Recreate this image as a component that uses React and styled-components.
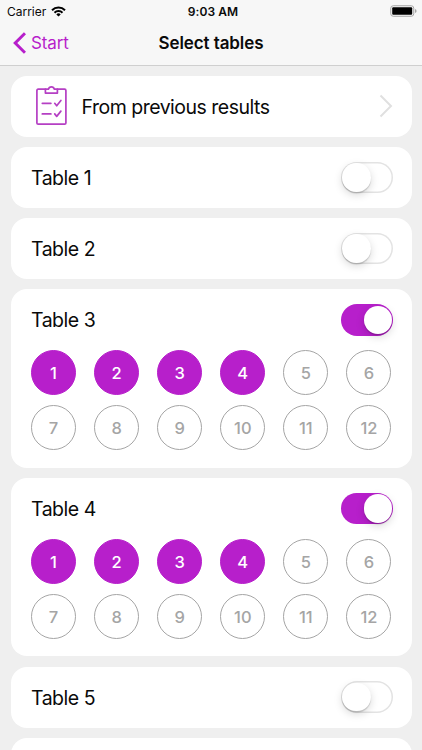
import { useState } from 'react';
import styled, { createGlobalStyle, ThemeProvider } from 'styled-components';

const theme = {
  colors: {
    accent: '#b71fcb',
    background: '#efefef',
    bar: '#f7f7f7',
    gray: '#a5a5a5',
    silver: '#e3e3e3',
  },
};

const GlobalStyle = createGlobalStyle`
  * {
    box-sizing: border-box;
  }
  body {
    margin: 0;
    background-color: #efefef;
    font-family: Inter, 'Liberation Sans', sans-serif;
    color: #0a0a0a;
  }
  button {
    font-family: inherit;
    padding: 0;
    cursor: pointer;
  }
`;

const Screen = styled.div`
  height: 750px;
  overflow: hidden;
  background-color: ${({ theme }) => theme.colors.background};
`;

const Header = styled.header`
  height: 66px;
  background-color: ${({ theme }) => theme.colors.bar};
  border-bottom: 1px solid #cfcfcf;
`;

const StatusBar = styled.div`
  display: grid;
  grid-template-columns: 1fr auto 1fr;
  align-items: center;
  height: 22px;
  padding: 0 5px 0 7px;
  font-size: 12px;
`;

const Carrier = styled.div`
  display: flex;
  align-items: center;
  gap: 5px;
  letter-spacing: -0.02px;
`;

const Time = styled.span`
  font-weight: 600;
  letter-spacing: 0.1px;
  padding-left: 2px;
`;

const Battery = styled.svg`
  justify-self: end;
`;

const NavBar = styled.nav`
  display: grid;
  grid-template-columns: 1fr auto 1fr;
  align-items: center;
  height: 42px;
  padding: 0 13px;
`;

const BackButton = styled.button`
  display: flex;
  align-items: center;
  gap: 5px;
  border: 0;
  background: none;
  color: ${({ theme }) => theme.colors.accent};
  font-size: 17px;
  letter-spacing: -0.1px;
`;

const Title = styled.h1`
  margin: 0;
  font-size: 17px;
  font-weight: 600;
  letter-spacing: -0.1px;
`;

const List = styled.main`
  display: flex;
  flex-direction: column;
  gap: 10.3px;
  padding: 9.6px 10.5px;
`;

const Card = styled.section`
  flex: none;
  padding: 0 18.5px 0 20.5px;
  border-radius: 16px;
  background-color: #fff;
`;

const Row = styled.div`
  display: flex;
  align-items: center;
  height: 61px;
`;

const Label = styled.span`
  flex: 1;
  padding-top: 1px;
  font-size: 19.5px;
  letter-spacing: -0.5px;
`;

const ClipboardIcon = styled.svg`
  margin: 0 14.5px 0 4.5px;
`;

const Switch = styled.button`
  display: flex;
  align-items: center;
  justify-content: ${({ $on }) => ($on ? 'flex-end' : 'flex-start')};
  width: 52px;
  height: 31.5px;
  padding: 0 1px;
  border: 0;
  border-radius: 16px;
  background-color: ${({ $on, theme }) => ($on ? theme.colors.accent : '#fff')};
  box-shadow: ${({ $on, theme }) =>
    $on ? 'none' : `inset 0 0 0 1.5px ${theme.colors.silver}`};
`;

const Knob = styled.span`
  width: 28.5px;
  height: 28.5px;
  border-radius: 50%;
  background-color: #fff;
  box-shadow: 0 3px 8px rgba(0, 0, 0, 0.15), 0 1.5px 1px rgba(0, 0, 0, 0.16);
`;

const Numbers = styled.div`
  display: grid;
  grid-template-columns: repeat(6, 45px);
  justify-content: space-between;
  row-gap: 10px;
  padding: 0 1.5px 17.3px 0;
`;

const NumberButton = styled.button`
  height: 45px;
  border: 1px solid ${({ $on, theme }) => ($on ? theme.colors.accent : theme.colors.gray)};
  border-radius: 50%;
  background-color: ${({ $on, theme }) => ($on ? theme.colors.accent : '#fff')};
  color: ${({ $on, theme }) => ($on ? '#fff' : theme.colors.gray)};
  font-size: 16.5px;
  font-weight: 500;
`;

const NUMBERS = Array.from({ length: 12 }, (_, index) => index + 1);

const TableCard = ({ table, enabled = false }) => {
  const [on, setOn] = useState(enabled);
  const [selected, setSelected] = useState([1, 2, 3, 4]);

  const toggleNumber = number =>
    setSelected(
      selected.includes(number)
        ? selected.filter(item => item !== number)
        : [...selected, number]
    );

  return (
    <Card>
      <Row>
        <Label>Table {table}</Label>
        <Switch
          $on={on}
          role='switch'
          aria-checked={on}
          aria-label={`Table ${table}`}
          onClick={() => setOn(!on)}
        >
          <Knob />
        </Switch>
      </Row>
      {on && (
        <Numbers>
          {NUMBERS.map(number => (
            <NumberButton
              key={number}
              $on={selected.includes(number)}
              onClick={() => toggleNumber(number)}
            >
              {number}
            </NumberButton>
          ))}
        </Numbers>
      )}
    </Card>
  );
};

const App = () => (
  <ThemeProvider theme={theme}>
    <GlobalStyle />
    <Screen>
      <Header>
        <StatusBar>
          <Carrier>
            Carrier
            <svg width='15' height='11' viewBox='0 0 15 11' fill='none' stroke='#000' strokeWidth='2'>
              <path d='M1 4.2a9.2 9.2 0 0 1 13 0' />
              <path d='M3.5 6.7a5.7 5.7 0 0 1 8 0' />
              <path d='M7.5 10.6 5.3 8.4a3.1 3.1 0 0 1 4.4 0z' fill='#000' stroke='none' />
            </svg>
          </Carrier>
          <Time>9:03 AM</Time>
          <Battery width='27' height='12' viewBox='0 0 27 12'>
            <rect x='0.75' y='0.75' width='23' height='10.5' rx='2.5' fill='none' stroke='#a5a5a5' />
            <rect x='2.2' y='2.2' width='20' height='7.6' rx='1' />
            <path d='M25 4v4q1.6-.5 1.6-2T25 4z' fill='#a5a5a5' />
          </Battery>
        </StatusBar>
        <NavBar>
          <BackButton>
            <svg width='13' height='22' viewBox='0 0 13 22' fill='none' stroke='currentColor' strokeWidth='3'>
              <path d='M12 1.2 2.2 11l9.8 9.8' />
            </svg>
            Start
          </BackButton>
          <Title>Select tables</Title>
        </NavBar>
      </Header>
      <List>
        <Card>
          <Row>
            <ClipboardIcon
              width='31.5'
              height='40'
              viewBox='0 0 31.5 40'
              fill='none'
              stroke='#b53fc4'
              strokeWidth='1.7'
              strokeLinecap='round'
              strokeLinejoin='round'
            >
              <path d='M9.4 3.2H2.2Q.9 3.2.9 4.5v32.4q0 1.3 1.3 1.3h26.4q1.3 0 1.3-1.3V4.5q0-1.3-1.3-1.3H21.4' />
              <path d='M9.4 3.2h3a3.1 3.1 0 0 1 6 0h3v3.9h-12z' />
              <path d='M6.3 17.3h8.6M6.3 27.9h8.6M18.7 17.3l2 2.5 4.2-5.3M18.7 27.9l2 2.5 4.2-5.3' />
            </ClipboardIcon>
            <Label>From previous results</Label>
            <svg width='14' height='24' viewBox='0 0 14 24' fill='none' stroke='#e0e0e0' strokeWidth='2'>
              <path d='M1.5 1.5 12 12 1.5 22.5' />
            </svg>
          </Row>
        </Card>
        <TableCard table={1} />
        <TableCard table={2} />
        <TableCard table={3} enabled />
        <TableCard table={4} enabled />
        <TableCard table={5} />
        <Card>
          <Row />
        </Card>
      </List>
    </Screen>
  </ThemeProvider>
);

export default App;
